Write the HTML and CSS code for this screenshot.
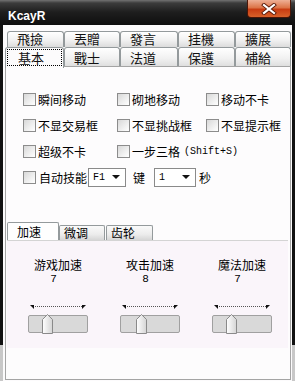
FILE: index.html
```
<!DOCTYPE html>
<html lang="zh">
<head>
    <meta charset="UTF-8">
    <title>KcayR</title>
    <link rel="stylesheet" href="styles.css">
</head>
<body>
    <div class="window">
        <div class="titlebar">
            <span class="title">KcayR</span>
            <span class="close-btn">
                <svg width="16" height="12" viewBox="0 0 16 12">
                    <path d="M3 2 L13 10 M13 2 L3 10" stroke="#5a1a08" stroke-width="4" stroke-linecap="square"/>
                    <path d="M3 2 L13 10 M13 2 L3 10" stroke="#fff" stroke-width="2.2" stroke-linecap="square"/>
                </svg>
            </span>
        </div>

        <div class="client">
            <div class="tab-row back">
                <div class="tab">飛撿</div>
                <div class="tab">丟贈</div>
                <div class="tab">發言</div>
                <div class="tab">挂機</div>
                <div class="tab">擴展</div>
            </div>
            <div class="tab-row front">
                <div class="tab selected"><span class="focus">基本</span></div>
                <div class="tab">戰士</div>
                <div class="tab">法道</div>
                <div class="tab">保護</div>
                <div class="tab">補給</div>
            </div>

            <div class="main-panel">
                <div class="options">
                    <label class="opt"><span class="check"></span>瞬间移动</label>
                    <label class="opt"><span class="check"></span>砌地移动</label>
                    <label class="opt"><span class="check"></span>移动不卡</label>
                    <label class="opt"><span class="check"></span>不显交易框</label>
                    <label class="opt"><span class="check"></span>不显挑战框</label>
                    <label class="opt"><span class="check"></span>不显提示框</label>
                    <label class="opt"><span class="check"></span>超级不卡</label>
                    <label class="opt wide"><span class="check"></span>一步三格<span class="mono">(Shift+S)</span></label>
                </div>

                <div class="auto-row">
                    <span class="check"></span>
                    <span class="auto-label">自动技能</span>
                    <span class="combo combo-key">F1</span>
                    <span class="unit unit-key">键</span>
                    <span class="combo combo-sec">1</span>
                    <span class="unit">秒</span>
                </div>

                <div class="sub-tabs">
                    <div class="sub-tab selected">加速</div>
                    <div class="sub-tab tab-mid">微调</div>
                    <div class="sub-tab tab-last">齿轮</div>
                </div>

                <div class="sub-panel">
                    <div class="speed">
                        <div class="speed-label">游戏加速</div>
                        <div class="speed-value">7</div>
                        <svg class="ticks" width="56" height="5" viewBox="0 0 56 5">
                            <line x1="3" y1="1.5" x2="53" y2="1.5" stroke="#555" stroke-dasharray="1 1"/>
                            <path d="M0 0 H4 V4 Z" fill="#111"/>
                            <path d="M56 0 H52 V4 Z" fill="#111"/>
                        </svg>
                        <div class="track">
                            <svg class="thumb" width="11" height="20" viewBox="0 0 11 20">
                                <defs>
                                    <linearGradient id="tg1" x1="0" y1="0" x2="1" y2="0">
                                        <stop offset="0" stop-color="#ffffff"/>
                                        <stop offset="1" stop-color="#d4d4d4"/>
                                    </linearGradient>
                                </defs>
                                <path d="M0.5 5.5 L5.5 0.5 L10.5 5.5 V19.5 H0.5 Z" fill="url(#tg1)" stroke="#8a8a8a"/>
                            </svg>
                        </div>
                    </div>
                    <div class="speed">
                        <div class="speed-label">攻击加速</div>
                        <div class="speed-value">8</div>
                        <svg class="ticks" width="56" height="5" viewBox="0 0 56 5">
                            <line x1="3" y1="1.5" x2="53" y2="1.5" stroke="#555" stroke-dasharray="1 1"/>
                            <path d="M0 0 H4 V4 Z" fill="#111"/>
                            <path d="M56 0 H52 V4 Z" fill="#111"/>
                        </svg>
                        <div class="track">
                            <svg class="thumb thumb-mid" width="11" height="20" viewBox="0 0 11 20">
                                <path d="M0.5 5.5 L5.5 0.5 L10.5 5.5 V19.5 H0.5 Z" fill="url(#tg1)" stroke="#8a8a8a"/>
                            </svg>
                        </div>
                    </div>
                    <div class="speed">
                        <div class="speed-label">魔法加速</div>
                        <div class="speed-value">7</div>
                        <svg class="ticks" width="56" height="5" viewBox="0 0 56 5">
                            <line x1="3" y1="1.5" x2="53" y2="1.5" stroke="#555" stroke-dasharray="1 1"/>
                            <path d="M0 0 H4 V4 Z" fill="#111"/>
                            <path d="M56 0 H52 V4 Z" fill="#111"/>
                        </svg>
                        <div class="track">
                            <svg class="thumb" width="11" height="20" viewBox="0 0 11 20">
                                <path d="M0.5 5.5 L5.5 0.5 L10.5 5.5 V19.5 H0.5 Z" fill="url(#tg1)" stroke="#8a8a8a"/>
                            </svg>
                        </div>
                    </div>
                </div>
            </div>
        </div>
    </div>
</body>
</html>
```

FILE: styles.css
```
* {
    margin: 0;
    padding: 0;
    box-sizing: border-box;
}

body {
    font-family: "Noto Sans CJK SC", "Noto Sans", sans-serif;
    font-size: 12px;
    color: #000;
    background: #fff;
}

.window {
    width: 295px;
    height: 381px;
    display: flex;
    flex-direction: column;
    overflow: hidden;
    background: linear-gradient(#111 0, #111 345px, #c8c8c8 345px);
}

.titlebar {
    height: 25px;
    flex: none;
    display: flex;
    justify-content: space-between;
    align-items: flex-start;
    background: linear-gradient(#727272 0, #3c3c3c 3px, #1e1e1e 12px, #0e0e0e 100%);
}

.title {
    font-family: "Liberation Sans", Arial, sans-serif;
    font-weight: bold;
    font-size: 12px;
    line-height: 13px;
    color: #fff;
    margin: 10px 0 0 8px;
}

.close-btn {
    width: 44px;
    height: 18px;
    margin-right: 4px;
    display: flex;
    align-items: center;
    justify-content: center;
    border: 1px solid #4a1608;
    border-top: none;
    border-radius: 0 0 4px 4px;
    background: linear-gradient(#eeb096 0%, #dc7448 45%, #c83c12 55%, #d8622a 100%);
}

.client {
    flex: 1;
    min-height: 0;
    margin: 0 3px;
    padding-top: 6px;
    display: flex;
    flex-direction: column;
    background: #fcfbfc;
}

.tab-row {
    display: grid;
    grid-template-columns: 57px 56px 58px 57px 56px;
    margin-left: 4px;
}

.tab-row.back {
    height: 16px;
}

.tab-row.front {
    height: 19px;
}

.tab {
    border: 1px solid #949a9c;
    border-bottom: none;
    border-radius: 3px 3px 0 0;
    background: linear-gradient(#ffffff, #f1f1f1 55%, #dcdcdc);
    font-size: 13px;
    line-height: 13px;
    padding-left: 9px;
    color: #111;
}

.tab-row.front .tab {
    line-height: 19px;
}

.tab.selected {
    position: relative;
    z-index: 1;
    margin-left: -2px;
    margin-bottom: -1px;
    padding: 1px 1px 0;
    background: #fcfbfc;
}

.focus {
    display: block;
    height: 17px;
    line-height: 16px;
    padding-left: 10px;
    border: 1px dotted #000;
}

.main-panel {
    flex: 1;
    margin: 0 1px 1px 2px;
    padding-top: 19px;
    border: 1px solid #a4a4a4;
    background: #fdfcfd;
    display: flex;
    flex-direction: column;
}

.options {
    display: grid;
    grid-template-columns: 94px 89px auto;
    grid-auto-rows: 26px;
    padding-left: 17px;
}

.opt {
    display: flex;
    align-items: center;
    gap: 2px;
    white-space: nowrap;
}

.opt.wide {
    grid-column: span 2;
}

.mono {
    font-family: "Liberation Mono", monospace;
    font-size: 10px;
    margin-left: 2px;
}

.check {
    width: 13px;
    height: 13px;
    flex: none;
    border: 1px solid #8c8c8c;
    background: linear-gradient(135deg, #d8d8d8, #f4f4f4 70%, #ffffff);
}

.auto-row {
    display: flex;
    align-items: center;
    height: 26px;
    padding-left: 17px;
}

.auto-label {
    margin-left: 3px;
}

.combo {
    display: flex;
    align-items: center;
    height: 19px;
    padding-left: 4px;
    border: 1px solid #8a8a8a;
    background: #fff;
    font-family: "Liberation Mono", monospace;
    font-size: 10px;
}

.combo::after {
    content: "";
    margin-left: auto;
    margin-right: 5px;
    border-top: 4px solid #111;
    border-left: 4px solid transparent;
    border-right: 4px solid transparent;
}

.combo-key {
    width: 38px;
    margin-left: 1px;
}

.combo-sec {
    width: 42px;
}

.unit {
    margin-left: 3px;
}

.unit-key {
    margin: 0 9px 0 7px;
}

.sub-tabs {
    display: flex;
    align-items: flex-end;
    height: 18px;
    margin-top: 32px;
    padding-left: 1px;
}

.sub-tab {
    height: 15px;
    border: 1px solid #949a9c;
    border-bottom: none;
    border-radius: 2px 2px 0 0;
    background: linear-gradient(#fafafa, #ececec 60%, #d6d6d6);
    line-height: 14px;
    padding-left: 4px;
}

.sub-tab.selected {
    width: 52px;
    height: 18px;
    line-height: 17px;
    padding-left: 9px;
    background: #fefefe;
}

.tab-mid {
    width: 46px;
}

.tab-last {
    width: 47px;
    margin-left: 1px;
}

.sub-panel {
    height: 108px;
    margin: 0 2px 0 1px;
    padding-left: 5px;
    display: flex;
    border-top: 1px solid #d4d4d4;
    background: #faf5fa;
}

.speed {
    width: 92px;
    padding-top: 17px;
    display: flex;
    flex-direction: column;
    align-items: center;
}

.speed-label {
    line-height: 14px;
}

.speed-value {
    line-height: 14px;
    padding-right: 9px;
    font-family: "Liberation Mono", monospace;
    font-size: 11px;
}

.ticks {
    display: block;
    margin-top: 19px;
}

.track {
    position: relative;
    width: 60px;
    height: 18px;
    margin-top: 5px;
    border: 1px solid #a0a0a0;
    border-radius: 2px;
    background: #d9d9d9;
}

.thumb {
    position: absolute;
    left: 13px;
    top: -2px;
}

.thumb-mid {
    left: 15px;
}
```
